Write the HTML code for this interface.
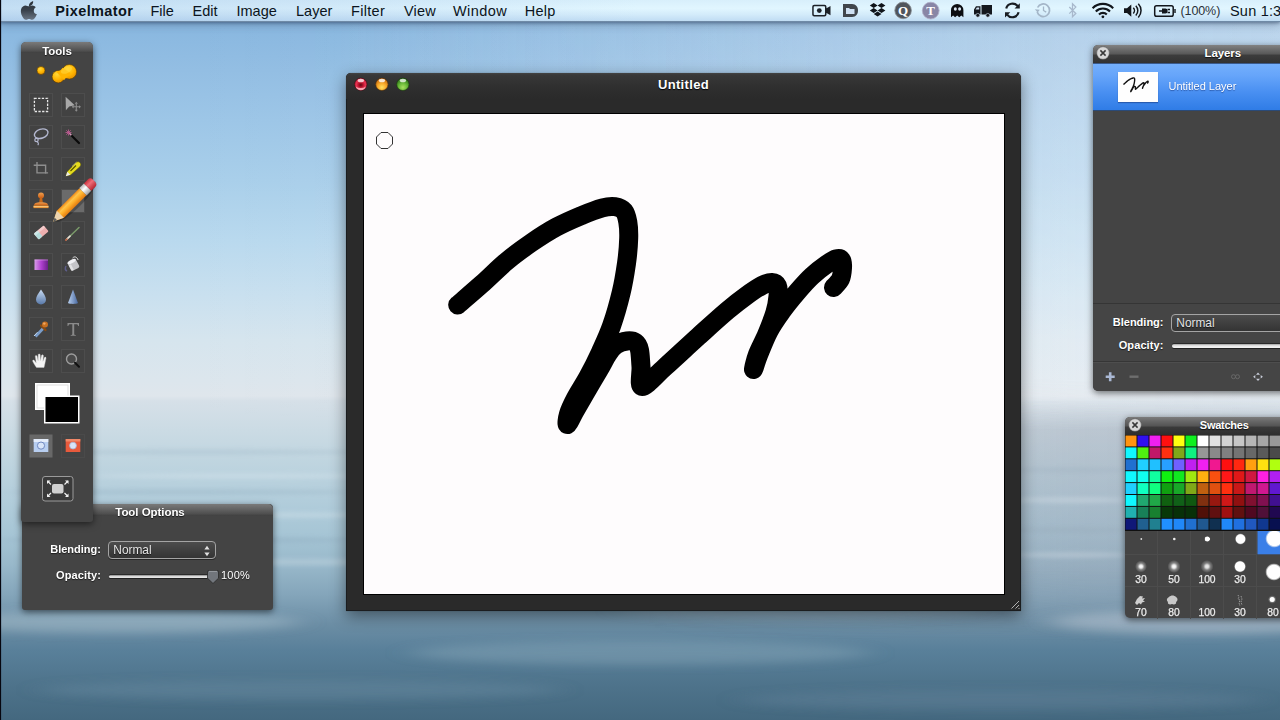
<!DOCTYPE html>
<html><head><meta charset="utf-8">
<style>
*{box-sizing:border-box;margin:0;padding:0}
html,body{width:1280px;height:720px;overflow:hidden;background:#5a7f96}
body{position:relative;font-family:"Liberation Sans",sans-serif;color:#fff}
.abs{position:absolute}
#bg{position:absolute;left:0;top:0;width:1280px;height:720px;
 background:linear-gradient(180deg,#88b6df 0px,#8ab8e0 30px,#93bee3 70px,#9dc6e7 120px,#a9cfea 180px,#b9d9ee 240px,#c9e0ef 295px,#d6e5ee 340px,#dce6ed 380px,#dfe6ec 396px,#d6e0e8 401px,#cbdbe4 430px,#bed4df 465px,#b2cddb 500px,#a6c5d5 535px,#98b8ca 565px,#84a5ba 595px,#6b8da4 625px,#59809a 650px,#4e738b 685px,#44687f 720px)}
#bgr{position:absolute;left:0;top:0;width:1280px;height:720px;
 background:linear-gradient(90deg,rgba(255,255,255,0) 0%,rgba(255,255,255,0) 15%,rgba(255,255,255,.12) 100%);-webkit-mask-image:linear-gradient(180deg,#000 0,#000 395px,transparent 420px);mask-image:linear-gradient(180deg,#000 0,#000 395px,transparent 420px)}
#bgs{position:absolute;left:640px;top:400px;width:640px;height:240px;
 background:linear-gradient(90deg,rgba(150,150,165,0) 0%,rgba(150,150,165,.3) 70%,rgba(150,150,165,.32) 100%);-webkit-mask-image:linear-gradient(180deg,transparent 0,#000 30px,#000 170px,transparent 240px);mask-image:linear-gradient(180deg,transparent 0,#000 30px,#000 170px,transparent 240px)}
#bgr2{position:absolute;left:0;top:0;width:1280px;height:430px;-webkit-mask-image:linear-gradient(180deg,#000 0,#000 88%,transparent 100%);mask-image:linear-gradient(180deg,#000 0,#000 88%,transparent 100%);
 background:linear-gradient(90deg,rgba(240,244,250,0) 0%,rgba(240,244,250,0) 25%,rgba(240,244,250,.36) 85%,rgba(240,244,250,.4) 100%)}
#edge{position:absolute;left:0;top:0;width:2px;height:720px;background:linear-gradient(90deg,#06060f 0,#06060f 1px,rgba(40,50,70,.25) 1px,rgba(40,50,70,.1) 2px);z-index:50}
/* menubar */
#menubar{position:absolute;left:0;top:0;width:1280px;height:21px;
 background:linear-gradient(90deg,rgba(150,185,225,.38) 0,rgba(150,185,225,.2) 25%,rgba(150,185,225,0) 50%),linear-gradient(180deg,#d8effb 0,#e1f6ff 40%,#d3ebfa 70%,#c0dcf3 100%);
 box-shadow:0 1px 0 #6f8aa6,0 2px 3px rgba(40,60,90,.5),0 4px 8px rgba(40,60,90,.3)}
#menubar span{position:absolute;top:2.500px;font-size:14.5px;color:#0b1420;line-height:17px;white-space:nowrap}
#menubar span.b{font-weight:bold}
/* panels */
.panel{position:absolute;background:#444;border-radius:5px;box-shadow:0 2px 7px rgba(0,0,0,.55)}
.ptitle{position:absolute;left:0;top:0;right:0;height:11px;border-radius:5px 5px 0 0;background:linear-gradient(180deg,#7a7a7a,#505050 80%,#3f3f3f)}
.ptext{position:absolute;font-size:11.5px;font-weight:bold;color:#fff;text-shadow:0 1px 1px rgba(0,0,0,.7);white-space:nowrap;letter-spacing:-.1px}
.lbl{position:absolute;font-size:11.5px;color:#fff;font-weight:bold;white-space:nowrap;text-shadow:0 1px 1px rgba(0,0,0,.6)}
</style></head><body>
<div id="bg"></div><div id="bgr"></div><div id="bgr2"></div><div id="bgs"></div><svg class="abs" style="left:0;top:380px" width="1280" height="340" viewBox="0 380 1280 340">
<defs><filter id="bl" x="-20%" y="-200%" width="140%" height="500%"><feGaussianBlur stdDeviation="14 5"/></filter><filter id="bl2" x="-20%" y="-200%" width="140%" height="500%"><feGaussianBlur stdDeviation="10 2"/></filter></defs>
<g filter="url(#bl)">
<ellipse cx="1200" cy="622" rx="150" ry="12" fill="#d0d8e2" opacity=".4"/>
<ellipse cx="800" cy="610" rx="180" ry="9" fill="#a8bccb" opacity=".35"/>
<ellipse cx="640" cy="653" rx="230" ry="12" fill="#a0b8c8" opacity=".3"/>
<ellipse cx="120" cy="622" rx="180" ry="11" fill="#b8ccd8" opacity=".4"/>
<ellipse cx="300" cy="690" rx="260" ry="10" fill="#7898ac" opacity=".3"/>
<ellipse cx="1000" cy="700" rx="260" ry="10" fill="#6c8ca2" opacity=".3"/>
</g>
<g filter="url(#bl2)" opacity=".3">
<ellipse cx="200" cy="452" rx="170" ry="2.500" fill="#9ab4c4"/>
<ellipse cx="240" cy="476" rx="150" ry="2.500" fill="#e4eef4"/>
<ellipse cx="180" cy="492" rx="170" ry="3" fill="#90acbe"/>
<ellipse cx="260" cy="515" rx="140" ry="3" fill="#e0ecf2"/>
<ellipse cx="180" cy="540" rx="180" ry="3.500" fill="#88a6ba"/>
<ellipse cx="300" cy="562" rx="120" ry="3.500" fill="#d4e2ea"/>
<ellipse cx="1070" cy="470" rx="60" ry="2.500" fill="#98acbc"/>
<ellipse cx="1070" cy="500" rx="60" ry="3" fill="#e4eaf0"/>
<ellipse cx="1070" cy="530" rx="60" ry="3" fill="#94a8b8"/>
<ellipse cx="1070" cy="555" rx="60" ry="3" fill="#dfe6ec"/>
</g>
</svg>
<div id="edge"></div>

<!-- MENUBAR -->
<div id="menubar">
<span class="b" style="left:55.300px;letter-spacing:.38px">Pixelmator</span>
<span style="left:150.500px">File</span>
<span style="left:192.500px">Edit</span>
<span style="left:236.500px">Image</span>
<span style="left:296px">Layer</span>
<span style="left:351px;letter-spacing:.3px">Filter</span>
<span style="left:404px;letter-spacing:.15px">View</span>
<span style="left:453px;letter-spacing:.42px">Window</span>
<span style="left:524.700px;letter-spacing:.3px">Help</span>
<span style="left:1180.500px;font-size:12.500px;color:#2a3038;letter-spacing:-.1px">(100%)</span>
<span style="left:1230px;letter-spacing:.2px">Sun 1:3</span>
<svg class="abs" style="left:0;top:0" width="1280" height="22" viewBox="0 0 1280 22">
<defs><linearGradient id="apl" x1="0" y1="0" x2="0" y2="1"><stop offset="0" stop-color="#2a3038"/><stop offset=".5" stop-color="#3a424c"/><stop offset="1" stop-color="#6a7684"/></linearGradient></defs>
<!-- apple -->
<path transform="translate(3.900 0) scale(.935 1)" d="M31.300 1.200c.2 1.500-.5 2.800-1.300 3.600-.9.900-2.100 1.500-3.200 1.400-.2-1.400.5-2.700 1.300-3.500.9-.9 2.300-1.500 3.200-1.500zM35.300 14c-.5 1.300-.8 1.900-1.500 3-.9 1.400-2.200 2.800-3.600 2.800-1.300 0-1.700-.8-3.300-.8s-2.100.8-3.400.8c-1.400 0-2.600-1.300-3.500-2.700-2.200-3.300-2.400-7.200-1-9.300.9-1.500 2.500-2.400 4-2.400 1.500 0 2.500.9 3.700.9 1.200 0 2-.9 3.700-.9 1.300 0 2.700.7 3.700 1.900-3.100 1.700-2.600 6.200.2 6.700z" fill="url(#apl)"/>
<g fill="#1c2128" stroke="none">
<!-- camera -->
<path d="M814.200 4.700h10.300a2 2 0 0 1 2 2v1.600l4-2.400v9.400l-4-2.400v1.600a2 2 0 0 1-2 2h-10.300a2 2 0 0 1-2-2v-7.800a2 2 0 0 1 2-2zm.3 1.500a.8.800 0 0 0-.8.800v7.200c0 .4.400.8.800.8h9.700c.4 0 .8-.4.800-.8v-7.200a.8.800 0 0 0-.8-.8z"/>
<circle cx="819.300" cy="10.600" r="2.400"/>
<!-- D folder -->
<path d="M843 4h9c4 0 6 3 6 6.500s-2 6.500-6 6.500h-9z" fill="#41464c"/>
<path d="M846 8h3l1 1h4.500v5h-8.500z" fill="#cfe0f2"/>
<!-- dropbox -->
<path d="M873.700 3l3.900 2.500-3.900 2.500-3.900-2.500zM881.500 3l3.900 2.500-3.900 2.500-3.900-2.500zM873.700 8l3.900 2.500-3.900 2.500-3.900-2.500zM881.500 8l3.900 2.500-3.900 2.500-3.900-2.500zM873.700 14l3.900-2.400 3.900 2.400-3.900 2.500z" fill="#10141a"/>
<!-- Q -->
<circle cx="903.100" cy="10.400" r="8.300" fill="#50555c"/>
<circle cx="903.100" cy="10.400" r="8.300" fill="none" stroke="#8a9098" stroke-width=".8"/>
<!-- T -->
<circle cx="930.700" cy="10.600" r="8.400" fill="#8886a6"/>
<circle cx="930.700" cy="10.600" r="8.400" fill="none" stroke="#b0aec8" stroke-width=".8"/>
<!-- ghost -->
<path d="M951 17.200v-7a6.200 6.200 0 0 1 12.400 0v7l-2.100-1.600-2 1.600-2.100-1.600-2.100 1.600-2-1.600z" fill="#0c0e12"/>
<ellipse cx="955.300" cy="9" rx="1.500" ry="1.800" fill="#dce8f4"/><ellipse cx="959.600" cy="9" rx="1.500" ry="1.800" fill="#dce8f4"/>
<!-- truck -->
<path d="M981.500 5h10.500v9.500h-10.500zM974 9.500l2-3.200h4.500v8.200h-6.500z" fill="#14181e"/>
<path d="M975.500 9.600l1.300-2h2.400v2z" fill="#cfe0f2"/>
<circle cx="977.800" cy="15.300" r="1.900" fill="#14181e" stroke="#cfe0f2" stroke-width=".6"/><circle cx="987.800" cy="15.300" r="1.900" fill="#14181e" stroke="#cfe0f2" stroke-width=".6"/>
</g>
<text x="903.100" y="14.800" font-family="Liberation Serif, serif" font-size="13" font-weight="bold" fill="#fff" text-anchor="middle">Q</text>
<text x="930.700" y="15.200" font-family="Liberation Serif, serif" font-size="13" font-weight="bold" fill="#fff" text-anchor="middle">T</text>
<!-- sync -->
<g fill="none" stroke="#181c22" stroke-width="2.200">
<path d="M1006.200 8.500a6.500 6.500 0 0 1 11.500-2.300"/><path d="M1018.600 12.300a6.500 6.500 0 0 1-11.500 2.300"/>
</g>
<path d="M1019.800 3.200v5.300h-5.300zM1005 17.600v-5.300h5.300z" fill="#181c22"/>
<!-- time machine (faded) -->
<g fill="none" stroke="#a4b6c8" stroke-width="1.700"><path d="M1037.600 7.500a6.300 6.300 0 1 1-.4 4.500"/><path d="M1043.500 6.500v4l2.700 1.600" stroke-width="1.300"/></g>
<path d="M1034.800 9.200l5 .6-2.200 2.800z" fill="#a4b6c8"/>
<!-- bluetooth (faded) -->
<path d="M1069.300 7l6.500 6.500-3.300 3.300v-13l3.300 3.300-6.500 6.500" fill="none" stroke="#a8b8cc" stroke-width="1.300"/>
<!-- wifi -->
<g fill="none" stroke="#12161c" stroke-width="2.100" stroke-linecap="butt">
<path d="M1092.600 8.200a14.500 14.500 0 0 1 20.600 0"/>
<path d="M1095.800 11.500a10 10 0 0 1 14.200 0"/>
<path d="M1099 14.500a5.500 5.500 0 0 1 7.800 0"/>
</g>
<circle cx="1102.900" cy="16.800" r="1.400" fill="#12161c"/>
<!-- volume -->
<path d="M1124 8.200h3l4.300-3.700v12.200l-4.300-3.700h-3z" fill="#12161c"/>
<g fill="none" stroke="#12161c" stroke-width="1.500"><path d="M1133.300 7.800a4 4 0 0 1 0 5.600"/><path d="M1135.800 5.700a7 7 0 0 1 0 9.800"/><path d="M1138.300 3.800a9.800 9.800 0 0 1 0 13.600"/></g>
<!-- battery -->
<rect x="1154.700" y="5.700" width="18.500" height="10.600" rx="1.800" fill="none" stroke="#12161c" stroke-width="1.500"/>
<path d="M1174.300 9h1.400v4h-1.400z" fill="#12161c"/>
<path d="M1159 11h3.200M1167.500 9.500h2.500M1167.500 12.500h2.500" stroke="#12161c" stroke-width="1.300"/>
<path d="M1162 8.400h3.500a2 2 0 0 1 2 2v1.200a2 2 0 0 1-2 2h-3.500z" fill="#12161c"/>
</svg>
</div>

<!-- TOOL OPTIONS -->
<div id="topt" class="panel" style="left:22px;top:503.500px;width:250.500px;height:106.500px;border-radius:4px 4px 3px 3px">
<div class="ptitle" style="height:12px"></div>
<div class="ptext" style="left:25px;width:250px;text-align:center;top:2.500px;line-height:13px;font-size:11.500px;letter-spacing:-.05px;left:3px">Tool Options</div>
<div class="lbl" style="right:171.600px;top:39px;line-height:13px;font-size:11px;letter-spacing:0">Blending:</div>
<div class="abs" style="left:86.400px;top:37.700px;width:107.600px;height:17.700px;border:1px solid #a4a4a4;border-radius:4px;background:linear-gradient(180deg,#4c4c4c,#343434);box-shadow:0 1px 0 rgba(0,0,0,.4)"></div>
<div class="abs" style="left:91.300px;top:40.600px;line-height:13px;font-size:11.900px;color:#e4e4e4;text-shadow:0 1px 1px rgba(0,0,0,.7)">Normal</div>
<svg class="abs" style="left:181px;top:41px" width="8" height="12" viewBox="0 0 8 12"><path d="M4 .8l2.600 3.700h-5.200zM4 11.200l2.600-3.700h-5.200z" fill="#e0e0e0"/></svg>
<div class="lbl" style="right:171.600px;top:65px;line-height:13px;font-size:11px;letter-spacing:.1px">Opacity:</div>
<div class="abs" style="left:87.400px;top:71.800px;width:103px;height:3px;border-radius:2px;background:linear-gradient(180deg,#8a8a8a,#d8d8d8 50%,#e8e8e8);box-shadow:0 1px 0 #222,0 -1px 0 #2a2a2a"></div>
<svg class="abs" style="left:184.500px;top:66px" width="12" height="14" viewBox="0 0 12 14"><path d="M2 .5h8a1.500 1.500 0 0 1 1.500 1.500v6.200l-5.500 5.300-5.500-5.300v-6.200a1.500 1.500 0 0 1 1.500-1.500z" fill="#72767c" stroke="#2a2a2a" stroke-width=".8"/><path d="M2 1.300h8" stroke="#a8acb0" stroke-width=".8"/></svg>
<div class="lbl" style="left:199px;top:65px;line-height:13px;font-size:11px;font-weight:normal;letter-spacing:.25px">100%</div>
</div>
<!-- TOOLS -->
<div id="tools" class="panel" style="left:21px;top:42px;width:72px;height:479.500px;border-radius:5px 5px 3px 3px">
<div class="ptitle"></div>
<div class="ptext" style="left:0;width:72px;text-align:center;top:2.600px;line-height:13px;font-size:11.500px;letter-spacing:-.05px">Tools</div>
</div>
<svg class="abs" style="left:0;top:0" width="300" height="540" viewBox="0 0 300 540">
<defs>
<radialGradient id="gold" cx=".4" cy=".3" r=".8"><stop offset="0" stop-color="#ffd83a"/><stop offset=".55" stop-color="#ffb400"/><stop offset="1" stop-color="#e08a00"/></radialGradient>
<linearGradient id="pbody" x1="0" y1="0" x2="0" y2="1"><stop offset="0" stop-color="#f08a18"/><stop offset=".3" stop-color="#ffc44a"/><stop offset=".55" stop-color="#ffb02a"/><stop offset="1" stop-color="#e27a10"/></linearGradient>
<linearGradient id="perase" x1="0" y1="0" x2="0" y2="1"><stop offset="0" stop-color="#c8323c"/><stop offset=".4" stop-color="#ef6d78"/><stop offset="1" stop-color="#b82832"/></linearGradient>
<linearGradient id="pfer" x1="0" y1="0" x2="0" y2="1"><stop offset="0" stop-color="#b8b8b8"/><stop offset=".4" stop-color="#ffffff"/><stop offset="1" stop-color="#a0a0a0"/></linearGradient>
<linearGradient id="purp" x1="0" y1="0" x2="1" y2="0"><stop offset="0" stop-color="#d79be8"/><stop offset=".5" stop-color="#b040d0"/><stop offset="1" stop-color="#6a2088"/></linearGradient>
<linearGradient id="drop" x1="0" y1="0" x2="0" y2="1"><stop offset="0" stop-color="#c8dcf4"/><stop offset="1" stop-color="#5878a8"/></linearGradient>
<linearGradient id="cone" x1="0" y1="0" x2="1" y2="0"><stop offset="0" stop-color="#b8d0f0"/><stop offset="1" stop-color="#4868a0"/></linearGradient>
<linearGradient id="stamp" x1="0" y1="0" x2="0" y2="1"><stop offset="0" stop-color="#f0a050"/><stop offset="1" stop-color="#c85a10"/></linearGradient>
</defs>
<!-- cells -->
<g fill="#424242" stroke="#4d4d4d" stroke-width="1">
<rect x="29.5" y="93.5" width="23" height="23"/>
<rect x="61.5" y="93.5" width="23" height="23"/>
<rect x="29.5" y="125.5" width="23" height="23"/>
<rect x="61.5" y="125.5" width="23" height="23"/>
<rect x="29.5" y="157.5" width="23" height="23"/>
<rect x="61.5" y="157.5" width="23" height="23"/>
<rect x="29.5" y="189.5" width="23" height="23"/>
<rect x="61.5" y="189.5" width="23" height="23"/>
<rect x="29.5" y="221.5" width="23" height="23"/>
<rect x="61.5" y="221.5" width="23" height="23"/>
<rect x="29.5" y="253.5" width="23" height="23"/>
<rect x="61.5" y="253.5" width="23" height="23"/>
<rect x="29.5" y="285.5" width="23" height="23"/>
<rect x="61.5" y="285.5" width="23" height="23"/>
<rect x="29.5" y="317.5" width="23" height="23"/>
<rect x="61.5" y="317.5" width="23" height="23"/>
<rect x="29.5" y="349.5" width="23" height="23"/>
<rect x="61.5" y="349.5" width="23" height="23"/>
</g>
<!-- selected cell -->
<rect x="62" y="190" width="22" height="22" fill="#6b6b6b"/>
<!-- gold blobs -->
<circle cx="41" cy="70.5" r="4" fill="url(#gold)" stroke="#5a3a00" stroke-width=".6"/>
<circle cx="58.300" cy="76.700" r="6.200" fill="url(#gold)" stroke="#5a3a00" stroke-width=".6"/><circle cx="69.300" cy="71.800" r="7.300" fill="url(#gold)" stroke="#5a3a00" stroke-width=".6"/><path d="M56 71.200c3 .5 5.500-1.500 6.500-3.500l8 5.500c-2 3-4.500 4-6.500 7z" fill="#ffb400"/><ellipse cx="66.500" cy="70" rx="6" ry="3.200" fill="#ffd840" opacity=".55" transform="rotate(-25 66.500 70)"/>
<!-- marquee -->
<rect x="34.400" y="98.300" width="13.200" height="13.200" fill="none" stroke="#e8e8e8" stroke-width="1.300" stroke-dasharray="2.300 1.400"/>
<!-- move arrow -->
<path d="M65.600 96.800l.3 13.500 3.300-3.800 5.500-1.200z" fill="#a8a8a8"/>
<path d="M76.300 103.500v6.500M73 106.800h6.500" stroke="#8c8c8c" stroke-width="1.100"/>
<path d="M76.300 101.800l1.600 2h-3.200zM76.300 111.800l1.600-2h-3.200zM71.600 106.800l2-1.600v3.200zM81 106.800l-2-1.600v3.200z" fill="#8c8c8c"/>
<!-- lasso -->
<g transform="translate(-.3 1.700)"><ellipse cx="41.500" cy="132" rx="7" ry="4.500" transform="rotate(-18 41.500 132)" fill="none" stroke="#b4b8d0" stroke-width="1.400"/>
<circle cx="36.800" cy="138.300" r="1.700" fill="none" stroke="#b4b8d0" stroke-width="1.200"/>
<path d="M37.500 140c1.500 1 1.500 2.500 .5 3.500" fill="none" stroke="#b4b8d0" stroke-width="1.100"/>
</g>
<!-- wand -->
<path d="M69.500 133.500L79 143" stroke="#0a0a0a" stroke-width="2.200" stroke-linecap="round"/>
<path d="M69.300 133.300l2 2" stroke="#e8b8d0" stroke-width="1.600"/>
<path d="M68.500 129.500v6M65.500 132.500h6M66.300 130.300l4.400 4.400M70.700 130.300l-4.400 4.400" stroke="#d060a0" stroke-width=".8" opacity=".9"/>
<!-- crop -->
<path d="M33.700 165.200H45.600V173.700M37 162V172.900H48.100" fill="none" stroke="#8e8e8e" stroke-width="1.400"/>
<!-- slice knife -->
<path d="M66 176l1.200-4.300 8.800-9c1.200-1.200 3-1.200 4 0 1 1 1 2.800-.2 4l-9.300 8.300z" fill="#e6dc1e" stroke="#6a6400" stroke-width=".5"/>
<path d="M65.800 176.300l1.500-4.500 3 3z" fill="#ececec"/>
<path d="M70.500 171l5.500-5.500" stroke="#5a5600" stroke-width="1.200"/>
<path d="M72 166.500l4.500-4.300" stroke="#fff8a0" stroke-width=".8" opacity=".8"/>
<!-- stamp -->
<circle cx="41" cy="195.500" r="3" fill="url(#stamp)"/>
<path d="M39.800 198h2.400l.6 4.500h-3.600z" fill="#c86818"/>
<path d="M34 205.500c0-2 2-3.200 7-3.200s7 1.200 7 3.200z" fill="url(#stamp)"/>
<rect x="33.500" y="205.500" width="15" height="2.600" fill="#e89030"/>
<rect x="33.500" y="206.300" width="15" height=".8" fill="#ffd890"/>
<!-- eraser -->
<g transform="rotate(-40 41.200 232.500)"><rect x="34.700" y="228.700" width="13" height="7.600" rx="1" fill="#eeb0b0"/><rect x="34.700" y="228.700" width="5" height="7.600" rx="1" fill="#b4dcdc"/><rect x="34.700" y="228.700" width="13" height="2.600" rx="1" fill="#fff" opacity=".35"/></g>
<!-- thin brush -->
<path d="M66.500 239.500L79 227.500" stroke="#7a9a6a" stroke-width="1.500" stroke-linecap="round"/>
<path d="M66.500 239.500l3.500-3.300" stroke="#e8e0d8" stroke-width="1.700" stroke-linecap="round"/>
<path d="M65.800 240.200l1.200-1.200" stroke="#c06040" stroke-width="1.500" stroke-linecap="round"/>
<!-- gradient -->
<rect x="34.500" y="259.500" width="13.500" height="10.500" fill="url(#purp)"/>
<rect x="34.500" y="259.500" width="13.500" height="1" fill="#e8b8f0" opacity=".5"/>
<!-- bucket -->
<g transform="translate(73.500 265) scale(.88) rotate(-28) translate(-73.200 -265)"><rect x="68" y="260" width="10.500" height="10.500" rx="2" fill="#c4c4c8"/><ellipse cx="73.200" cy="260.500" rx="5.300" ry="2" fill="#f0f0f4"/><rect x="68" y="263" width="3" height="7" fill="#fff" opacity=".5"/><path d="M76 257.500c3-1 5 1 4.500 5" fill="none" stroke="#e0e0e0" stroke-width="1"/></g>
<path d="M66 266c-1 2-1 4 1 5" stroke="#6a6aa8" stroke-width="1.500" fill="none" opacity=".7"/>
<!-- drop -->
<path d="M41 289.500c2.500 4 5 6.800 5 10a5 5 0 0 1-10 0c0-3.200 2.500-6 5-10z" fill="url(#drop)"/>
<!-- cone -->
<path d="M73 289.500l5 13.500c-2 1.200-8 1.200-10 0z" fill="url(#cone)"/>
<!-- eyedropper -->
<path d="M34.500 335.500l7.500-8 2 2-7.500 8z" fill="#7a9cc8"/>
<path d="M34 336l3.500-3.800" stroke="#c8dcf4" stroke-width="1"/>
<path d="M41 325.500l4.500 4.500" stroke="#8a4a10" stroke-width="2.200" stroke-linecap="round"/>
<circle cx="45" cy="324.500" r="3" fill="#c87020"/>
<circle cx="44.300" cy="323.600" r="1.200" fill="#f0a860"/>
<!-- T -->
<path d="M67.500 323h11.500v3h-.8c-.2-1.300-.7-1.800-2-1.800h-2v9.500c0 1 .4 1.300 1.600 1.400v.7h-5.100v-.7c1.200-.1 1.600-.4 1.600-1.400v-9.500h-2c-1.300 0-1.800.5-2 1.800h-.8z" fill="#8a8a8a"/>
<!-- hand -->
<path d="M36.500 367.500c-1.500-2-3-4.500-3.800-6.200-.5-1 .8-1.800 1.600-.9l1.900 2.300-.9-6.200c-.2-1.200 1.500-1.500 1.800-.3l1 4.500.1-5.800c0-1.300 1.900-1.300 2 0l.3 5.700 1-5c.3-1.200 2-.9 1.900.3l-.5 5.400 1.400-3.600c.4-1.100 2-.6 1.700.6-.7 3-1 5.500-2 9.200z" fill="#f4f4f4" stroke="#c8c8c8" stroke-width=".4"/>
<!-- zoom -->
<circle cx="71.500" cy="359" r="5" fill="#4a4a4a" stroke="#9c9c9c" stroke-width="1.400"/>
<path d="M75 362.800l4 4" stroke="#111" stroke-width="2" stroke-linecap="round"/>
<!-- colour wells -->
<rect x="35" y="383" width="35" height="27" fill="#fff"/><rect x="37" y="385" width="31" height="23" fill="none" stroke="#d8d8d8" stroke-width=".8"/>
<rect x="44" y="395.500" width="35.500" height="28" fill="#fff"/><rect x="45.500" y="397" width="32.500" height="25" fill="#000"/>
<!-- quick mask buttons -->
<rect x="29.500" y="434.500" width="23" height="23" fill="#686868"/>
<rect x="61.500" y="434.500" width="23" height="23" fill="none" stroke="#4a4a4a"/>
<rect x="33.700" y="439" width="14.600" height="13" fill="#b8cef0"/><rect x="33.700" y="439" width="14.600" height="3" fill="#e4ecfa"/><circle cx="41" cy="445.600" r="3.600" fill="#d8e4f8" stroke="#7088c0" stroke-width="1"/>
<rect x="65.700" y="439" width="14.600" height="13" fill="#e85a3c"/><rect x="65.700" y="439" width="14.600" height="2.500" fill="#f08868"/><circle cx="73" cy="445.600" r="3.400" fill="#d8e4f8" stroke="#a8b8d8" stroke-width=".8"/>
<!-- fullscreen -->
<rect x="42.500" y="476.500" width="30.500" height="24.500" rx="2.500" fill="#3a3a3a" stroke="#9a9a9a" stroke-width="1"/>
<rect x="52" y="484" width="11.500" height="9.500" rx="2" fill="#d0d0d0"/>
<path d="M47 480.500h3.500l-3.500 3.500zM68.500 480.500h-3.500l3.500 3.500zM47 497h3.500l-3.500-3.500zM68.500 497h-3.500l3.500-3.500z" fill="#f0f0f0"/>
<path d="M47.500 481l3.500 3.500M68 481l-3.500 3.500M47.500 496.500l3.500-3.500M68 496.500l-3.500-3.500" stroke="#f0f0f0" stroke-width="1.200"/>
<!-- big pencil -->
<g transform="translate(53.300 221.400) rotate(-45)">
<ellipse cx="30" cy="2" rx="28" ry="6" fill="#000" opacity=".25"/>
<path d="M0 0l10-5h32v10h-32z" fill="url(#pbody)"/>
<path d="M0 0l10-5v10z" fill="#ecd4b0"/>
<path d="M0 0l3.600-1.800v3.600z" fill="#5a5a5a"/>
<rect x="42" y="-5.200" width="6.500" height="10.400" fill="url(#pfer)"/>
<path d="M48.500-5.200h5.500a3.500 3.500 0 0 1 3.500 3.500v3.400a3.500 3.500 0 0 1-3.500 3.500h-5.500z" fill="url(#perase)"/>
</g>
</svg>

<!-- WINDOW -->
<div id="win" class="abs" style="left:346px;top:73px;width:675px;height:538px;background:#2a2a2a;border-radius:5px 5px 0 0;box-shadow:inset 0 0 0 1px rgba(15,18,22,.55),0 0 1px rgba(15,20,25,.6),0 5px 16px rgba(0,0,0,.45)">
<div class="abs" style="left:0;top:0;width:675px;height:26px;border-radius:5px 5px 0 0;background:linear-gradient(180deg,#444 0,#383838 2px,#2f2f2f 14px,#2a2a2a 26px)"></div>
<div class="abs" style="left:0;width:675px;top:4.400px;text-align:center;font-size:13px;font-weight:bold;line-height:15px;color:#fff;text-shadow:0 1px 1px #000;letter-spacing:.35px">Untitled</div>
<div class="abs" style="left:17px;top:40px;width:642px;height:482px;background:#000"></div>
<div class="abs" style="left:18px;top:41px;width:640px;height:480px;background:#fefcfd"></div>
</div>
<svg class="abs" style="left:0;top:0" width="1280" height="720" viewBox="0 0 1280 720">
<defs>
<radialGradient id="tr" cx=".5" cy=".55" r=".55"><stop offset="0" stop-color="#5a0810"/><stop offset=".3" stop-color="#b01028"/><stop offset=".65" stop-color="#e83050"/><stop offset="1" stop-color="#c02038"/></radialGradient>
<radialGradient id="ty" cx=".5" cy=".75" r=".7"><stop offset="0" stop-color="#ffe060"/><stop offset=".5" stop-color="#f8a828"/><stop offset="1" stop-color="#c06810"/></radialGradient>
<radialGradient id="tg" cx=".5" cy=".75" r=".7"><stop offset="0" stop-color="#a8e060"/><stop offset=".5" stop-color="#68b838"/><stop offset="1" stop-color="#2a7018"/></radialGradient>
</defs>
<circle cx="360.800" cy="84.300" r="6.200" fill="url(#tr)" stroke="#3a0a10" stroke-width=".6"/>
<ellipse cx="360.800" cy="80.500" rx="3.200" ry="1.800" fill="#fff" opacity=".75"/>
<path d="M355.800 86.500a5.200 5.200 0 0 0 10 0a6 3.500 0 0 1-10 0z" fill="#ffc0c8" opacity=".8"/>
<circle cx="381.900" cy="84.300" r="6.200" fill="url(#ty)" stroke="#4a2a08" stroke-width=".6"/>
<ellipse cx="381.900" cy="80.500" rx="3.200" ry="1.800" fill="#fff" opacity=".8"/>
<circle cx="402.900" cy="84.300" r="6.200" fill="url(#tg)" stroke="#183808" stroke-width=".6"/>
<ellipse cx="402.900" cy="80.500" rx="3.200" ry="1.800" fill="#fff" opacity=".75"/>
<!-- brush cursor -->
<path d="M381 132.500h7l4.500 4.500v7l-4.500 4.500h-7l-4.500-4.500v-7z" fill="none" stroke="#333" stroke-width="1"/>
<!-- stroke -->
<path d="M457.7 305.0C461.7 301.5 473.5 291.5 481.7 284.2C489.9 276.9 498.4 268.1 506.7 261.2C515.0 254.2 523.4 248.2 531.7 242.5C540.0 236.8 548.4 231.4 556.7 226.9C565.0 222.4 574.1 218.6 581.7 215.4C589.3 212.2 597.0 209.3 602.5 207.8C608.0 206.3 611.4 206.1 615.0 206.6C618.6 207.1 621.9 208.4 624.0 211.0C626.1 213.6 627.0 217.4 627.8 222.0C628.6 226.6 628.9 231.4 628.7 238.3C628.5 245.2 627.8 254.3 626.5 263.3C625.2 272.3 623.7 282.1 621.2 292.5C618.7 302.9 615.0 316.1 611.5 326.0C608.0 335.9 604.3 343.6 600.4 352.1C596.5 360.6 592.1 369.4 587.9 377.1C583.7 384.8 578.6 392.4 575.4 398.5C572.2 404.6 569.8 409.7 568.5 414.0C567.2 418.3 566.4 425.0 567.5 424.5C568.6 424.0 571.9 416.4 575.0 411.0C578.1 405.6 582.0 398.8 586.0 392.0C590.0 385.2 595.3 376.3 599.0 370.0C602.7 363.7 605.2 358.2 608.0 354.0C610.8 349.8 612.8 347.2 616.0 345.0C619.2 342.8 623.8 341.4 627.0 341.0C630.2 340.6 633.4 341.0 635.5 342.5C637.6 344.0 638.6 346.0 639.5 350.0C640.4 354.0 640.5 360.6 641.0 366.7C641.5 372.8 638.3 386.4 642.3 386.5C646.3 386.6 655.7 375.3 665.0 367.0C674.3 358.7 687.9 345.9 698.3 336.5C708.7 327.1 719.5 317.2 727.5 310.5C735.5 303.8 740.2 300.2 746.0 296.0C751.8 291.8 757.7 287.8 762.0 285.5C766.3 283.2 769.4 282.4 772.0 282.5C774.6 282.6 776.5 283.8 777.5 286.0C778.5 288.2 778.4 291.6 778.0 296.0C777.6 300.4 776.9 305.8 775.0 312.2C773.1 318.6 769.6 327.4 766.7 334.4C763.8 341.4 759.7 348.5 757.5 354.4C755.3 360.2 753.2 369.6 753.5 369.5C753.8 369.4 756.4 360.4 759.0 354.0C761.6 347.6 765.2 338.2 769.0 331.0C772.8 323.8 777.2 317.7 782.0 311.0C786.8 304.3 793.0 296.8 798.0 291.0C803.0 285.2 807.2 280.4 812.0 276.0C816.8 271.6 822.7 267.1 826.7 264.3C830.7 261.5 833.5 259.7 836.0 259.0C838.5 258.3 840.4 258.5 841.5 260.0C842.6 261.5 842.7 264.8 842.5 268.0C842.3 271.2 842.0 275.8 840.5 279.0C839.0 282.2 834.7 286.1 833.5 287.5" fill="none" stroke="#000" stroke-width="19" stroke-linecap="round" stroke-linejoin="round"/>
<!-- resize grip -->
<path d="M1011.500 608.500l7.500-7.500M1015.500 608.500l3.500-3.500M1018.500 609l1-1" stroke="#b0b0b0" stroke-width="1"/>
</svg>
<!-- LAYERS -->
<div id="layers" class="panel" style="left:1093.300px;top:45.300px;width:259px;height:346px;background:#444">
<div class="abs" style="left:0;top:0;width:259px;height:18px;border-radius:5px 5px 0 0;background:linear-gradient(180deg,#828282 0,#6c6c6c 25%,#585858 50%,#3c3c3c 56%,#323232 100%)"></div>
<div class="ptext" style="left:0;width:259px;text-align:center;top:1.500px;line-height:13px;font-size:11.500px;letter-spacing:-.1px">Layers</div>
<svg class="abs" style="left:3.200px;top:1.200px" width="14" height="14" viewBox="0 0 14 14"><circle cx="7" cy="7" r="6.300" fill="#d8d8d8" stroke="#555" stroke-width=".5"/><path d="M4.400 4.400l5.200 5.200M9.600 4.400l-5.200 5.200" stroke="#383838" stroke-width="1.500" stroke-linecap="butt"/></svg>
<div class="abs" style="left:0;top:17.600px;width:259px;height:48px;background:linear-gradient(180deg,#74affc 0,#66a5fa 25%,#4a90f2 60%,#2f7ce6 100%);border-top:1px solid #3a5a8c;border-bottom:1px solid #2a4a78"></div>
<div class="abs" style="left:24.500px;top:26.400px;width:40.300px;height:30.500px;background:#fefefe;box-shadow:0 1px 1px rgba(0,0,40,.3)"></div>
<svg class="abs" style="left:24.500px;top:26.400px" width="40.300" height="30.500" viewBox="364 114 640 480" preserveAspectRatio="none"><path d="M457.7 305.0C461.7 301.5 473.5 291.5 481.7 284.2C489.9 276.9 498.4 268.1 506.7 261.2C515.0 254.2 523.4 248.2 531.7 242.5C540.0 236.8 548.4 231.4 556.7 226.9C565.0 222.4 574.1 218.6 581.7 215.4C589.3 212.2 597.0 209.3 602.5 207.8C608.0 206.3 611.4 206.1 615.0 206.6C618.6 207.1 621.9 208.4 624.0 211.0C626.1 213.6 627.0 217.4 627.8 222.0C628.6 226.6 628.9 231.4 628.7 238.3C628.5 245.2 627.8 254.3 626.5 263.3C625.2 272.3 623.7 282.1 621.2 292.5C618.7 302.9 615.0 316.1 611.5 326.0C608.0 335.9 604.3 343.6 600.4 352.1C596.5 360.6 592.1 369.4 587.9 377.1C583.7 384.8 578.6 392.4 575.4 398.5C572.2 404.6 569.8 409.7 568.5 414.0C567.2 418.3 566.4 425.0 567.5 424.5C568.6 424.0 571.9 416.4 575.0 411.0C578.1 405.6 582.0 398.8 586.0 392.0C590.0 385.2 595.3 376.3 599.0 370.0C602.7 363.7 605.2 358.2 608.0 354.0C610.8 349.8 612.8 347.2 616.0 345.0C619.2 342.8 623.8 341.4 627.0 341.0C630.2 340.6 633.4 341.0 635.5 342.5C637.6 344.0 638.6 346.0 639.5 350.0C640.4 354.0 640.5 360.6 641.0 366.7C641.5 372.8 638.3 386.4 642.3 386.5C646.3 386.6 655.7 375.3 665.0 367.0C674.3 358.7 687.9 345.9 698.3 336.5C708.7 327.1 719.5 317.2 727.5 310.5C735.5 303.8 740.2 300.2 746.0 296.0C751.8 291.8 757.7 287.8 762.0 285.5C766.3 283.2 769.4 282.4 772.0 282.5C774.6 282.6 776.5 283.8 777.5 286.0C778.5 288.2 778.4 291.6 778.0 296.0C777.6 300.4 776.9 305.8 775.0 312.2C773.1 318.6 769.6 327.4 766.7 334.4C763.8 341.4 759.7 348.5 757.5 354.4C755.3 360.2 753.2 369.6 753.5 369.5C753.8 369.4 756.4 360.4 759.0 354.0C761.6 347.6 765.2 338.2 769.0 331.0C772.8 323.8 777.2 317.7 782.0 311.0C786.8 304.3 793.0 296.8 798.0 291.0C803.0 285.2 807.2 280.4 812.0 276.0C816.8 271.6 822.7 267.1 826.7 264.3C830.7 261.5 833.5 259.7 836.0 259.0C838.5 258.3 840.4 258.5 841.5 260.0C842.6 261.5 842.7 264.8 842.5 268.0C842.3 271.2 842.0 275.8 840.5 279.0C839.0 282.2 834.7 286.1 833.5 287.5" fill="none" stroke="#111" stroke-width="22" stroke-linecap="round" stroke-linejoin="round"/></svg>
<div class="abs" style="left:75.200px;top:34.500px;line-height:13px;font-size:11px;color:#fff;text-shadow:0 1px 1px rgba(0,20,80,.45);white-space:nowrap">Untitled Layer</div>
<div class="abs" style="left:0;top:258px;width:259px;height:1px;background:#353535"></div>
<div class="abs" style="left:0;top:259px;width:259px;height:87px;background:#454545;border-radius:0 0 5px 5px"></div>
<div class="lbl" style="right:188.800px;top:270.500px;line-height:13px;font-size:11px;letter-spacing:0">Blending:</div>
<div class="abs" style="left:77.700px;top:269.100px;width:150px;height:17.500px;border:1px solid #a4a4a4;border-radius:4px;background:linear-gradient(180deg,#4c4c4c,#343434)"></div>
<div class="abs" style="left:83px;top:271.800px;line-height:13px;font-size:11.900px;color:#e4e4e4;text-shadow:0 1px 1px rgba(0,0,0,.7)">Normal</div>
<div class="lbl" style="right:188.800px;top:293.500px;line-height:13px;font-size:11px;letter-spacing:.1px">Opacity:</div>
<div class="abs" style="left:78.700px;top:299px;width:150px;height:3.500px;border-radius:2px;background:linear-gradient(180deg,#a0a0a0,#e8e8e8 45%,#f4f4f4);box-shadow:0 1px 0 #222,0 -1px 0 #2a2a2a"></div>
<div class="abs" style="left:0;top:316px;width:259px;height:1px;background:#363636"></div>
<div class="abs" style="left:0;top:317px;width:259px;height:1px;background:#4e4e4e"></div>
<svg class="abs" style="left:0;top:320px" width="200" height="24" viewBox="0 0 200 24">
<path d="M17.200 7.200v9M12.700 11.700h9" stroke="#aab8d4" stroke-width="2.600"/>
<path d="M36.500 11.700h9" stroke="#6e6e6e" stroke-width="2.400"/>
<path d="M138.500 11.700a2 2 0 1 0 4 0 2 2 0 1 0-4 0M142.500 11.700a2 2 0 1 0 4 0 2 2 0 1 0-4 0" fill="none" stroke="#686868" stroke-width="1"/>
<path d="M163 9.700l2-2.300 2 2.300zM163 13.700l2 2.300 2-2.300zM162.300 9.900l-2.200 1.800 2.200 1.800zM167.700 9.900l2.200 1.800-2.200 1.800z" fill="#c8ccd8"/>
</svg>
</div>
<!-- SWATCHES -->
<div id="sw" class="panel" style="left:1124.800px;top:416.700px;width:200px;height:201.800px;background:#444">
<div class="abs" style="left:0;top:0;width:200px;height:18.500px;border-radius:5px 5px 0 0;background:linear-gradient(180deg,#7c7c7c 0,#666 25%,#545454 50%,#3a3a3a 56%,#2e2e2e 100%)"></div>
<div class="ptext" style="left:75px;top:2px;line-height:13px;font-size:11px;letter-spacing:-.25px">Swatches</div>
<svg class="abs" style="left:3.700px;top:1.800px" width="14" height="14" viewBox="0 0 14 14"><circle cx="7" cy="7" r="6.300" fill="#d8d8d8" stroke="#555" stroke-width=".5"/><path d="M4.400 4.400l5.200 5.200M9.600 4.400l-5.200 5.200" stroke="#383838" stroke-width="1.500" stroke-linecap="butt"/></svg>
<svg class="abs" style="left:0;top:18.500px" width="160" height="96" viewBox="0 0 160 96"><rect x="0" y="0" width="160" height="96" fill="#101010"/>
<rect x="0.5" y="0.5" width="11" height="10.900" fill="#FF9410"/>
<rect x="12.5" y="0.5" width="11" height="10.900" fill="#3010F0"/>
<rect x="24.5" y="0.5" width="11" height="10.900" fill="#F020F0"/>
<rect x="36.5" y="0.5" width="11" height="10.900" fill="#FF1010"/>
<rect x="48.5" y="0.5" width="11" height="10.900" fill="#FFFF10"/>
<rect x="60.5" y="0.5" width="11" height="10.900" fill="#10F020"/>
<rect x="72.5" y="0.5" width="11" height="10.900" fill="#FFFFFF"/>
<rect x="84.5" y="0.5" width="11" height="10.900" fill="#E2E2E2"/>
<rect x="96.5" y="0.5" width="11" height="10.900" fill="#D2D2D2"/>
<rect x="108.5" y="0.5" width="11" height="10.900" fill="#C6C6C6"/>
<rect x="120.5" y="0.5" width="11" height="10.900" fill="#B6B6B6"/>
<rect x="132.5" y="0.5" width="11" height="10.900" fill="#A6A6A6"/>
<rect x="144.5" y="0.5" width="11" height="10.900" fill="#989898"/>
<rect x="0.5" y="12.4" width="11" height="10.900" fill="#10F8FF"/>
<rect x="12.5" y="12.4" width="11" height="10.900" fill="#50F010"/>
<rect x="24.5" y="12.4" width="11" height="10.900" fill="#C01868"/>
<rect x="36.5" y="12.4" width="11" height="10.900" fill="#FF3010"/>
<rect x="48.5" y="12.4" width="11" height="10.900" fill="#80A818"/>
<rect x="60.5" y="12.4" width="11" height="10.900" fill="#10F080"/>
<rect x="72.5" y="12.4" width="11" height="10.900" fill="#969696"/>
<rect x="84.5" y="12.4" width="11" height="10.900" fill="#8A8A8A"/>
<rect x="96.5" y="12.4" width="11" height="10.900" fill="#808080"/>
<rect x="108.5" y="12.4" width="11" height="10.900" fill="#747474"/>
<rect x="120.5" y="12.4" width="11" height="10.900" fill="#686868"/>
<rect x="132.5" y="12.4" width="11" height="10.900" fill="#5A5A5A"/>
<rect x="144.5" y="12.4" width="11" height="10.900" fill="#4A4A4A"/>
<rect x="0.5" y="24.3" width="11" height="10.900" fill="#2070D0"/>
<rect x="12.5" y="24.3" width="11" height="10.900" fill="#20D0FF"/>
<rect x="24.5" y="24.3" width="11" height="10.900" fill="#20C0FF"/>
<rect x="36.5" y="24.3" width="11" height="10.900" fill="#28A0FF"/>
<rect x="48.5" y="24.3" width="11" height="10.900" fill="#7060FF"/>
<rect x="60.5" y="24.3" width="11" height="10.900" fill="#C020F0"/>
<rect x="72.5" y="24.3" width="11" height="10.900" fill="#F020F0"/>
<rect x="84.5" y="24.3" width="11" height="10.900" fill="#F01890"/>
<rect x="96.5" y="24.3" width="11" height="10.900" fill="#FF1010"/>
<rect x="108.5" y="24.3" width="11" height="10.900" fill="#FF2810"/>
<rect x="120.5" y="24.3" width="11" height="10.900" fill="#FFA010"/>
<rect x="132.5" y="24.3" width="11" height="10.900" fill="#FFE010"/>
<rect x="144.5" y="24.3" width="11" height="10.900" fill="#B0FF10"/>
<rect x="0.5" y="36.2" width="11" height="10.900" fill="#10F8FF"/>
<rect x="12.5" y="36.2" width="11" height="10.900" fill="#10FFF0"/>
<rect x="24.5" y="36.2" width="11" height="10.900" fill="#10FFA0"/>
<rect x="36.5" y="36.2" width="11" height="10.900" fill="#10F010"/>
<rect x="48.5" y="36.2" width="11" height="10.900" fill="#10E820"/>
<rect x="60.5" y="36.2" width="11" height="10.900" fill="#A0E810"/>
<rect x="72.5" y="36.2" width="11" height="10.900" fill="#FFB010"/>
<rect x="84.5" y="36.2" width="11" height="10.900" fill="#F85010"/>
<rect x="96.5" y="36.2" width="11" height="10.900" fill="#FF1818"/>
<rect x="108.5" y="36.2" width="11" height="10.900" fill="#E01818"/>
<rect x="120.5" y="36.2" width="11" height="10.900" fill="#D01840"/>
<rect x="132.5" y="36.2" width="11" height="10.900" fill="#FF20E0"/>
<rect x="144.5" y="36.2" width="11" height="10.900" fill="#B020F0"/>
<rect x="0.5" y="48.1" width="11" height="10.900" fill="#20D0FF"/>
<rect x="12.5" y="48.1" width="11" height="10.900" fill="#10FFC0"/>
<rect x="24.5" y="48.1" width="11" height="10.900" fill="#10FF80"/>
<rect x="36.5" y="48.1" width="11" height="10.900" fill="#10A010"/>
<rect x="48.5" y="48.1" width="11" height="10.900" fill="#18A828"/>
<rect x="60.5" y="48.1" width="11" height="10.900" fill="#80A818"/>
<rect x="72.5" y="48.1" width="11" height="10.900" fill="#C06010"/>
<rect x="84.5" y="48.1" width="11" height="10.900" fill="#E05010"/>
<rect x="96.5" y="48.1" width="11" height="10.900" fill="#FF3010"/>
<rect x="108.5" y="48.1" width="11" height="10.900" fill="#C81818"/>
<rect x="120.5" y="48.1" width="11" height="10.900" fill="#C01870"/>
<rect x="132.5" y="48.1" width="11" height="10.900" fill="#D01890"/>
<rect x="144.5" y="48.1" width="11" height="10.900" fill="#6018D0"/>
<rect x="0.5" y="60.0" width="11" height="10.900" fill="#10F8FF"/>
<rect x="12.5" y="60.0" width="11" height="10.900" fill="#20A870"/>
<rect x="24.5" y="60.0" width="11" height="10.900" fill="#20A848"/>
<rect x="36.5" y="60.0" width="11" height="10.900" fill="#106010"/>
<rect x="48.5" y="60.0" width="11" height="10.900" fill="#106018"/>
<rect x="60.5" y="60.0" width="11" height="10.900" fill="#105810"/>
<rect x="72.5" y="60.0" width="11" height="10.900" fill="#803010"/>
<rect x="84.5" y="60.0" width="11" height="10.900" fill="#981810"/>
<rect x="96.5" y="60.0" width="11" height="10.900" fill="#D01818"/>
<rect x="108.5" y="60.0" width="11" height="10.900" fill="#901010"/>
<rect x="120.5" y="60.0" width="11" height="10.900" fill="#801030"/>
<rect x="132.5" y="60.0" width="11" height="10.900" fill="#801050"/>
<rect x="144.5" y="60.0" width="11" height="10.900" fill="#401090"/>
<rect x="0.5" y="71.9" width="11" height="10.900" fill="#20B0B0"/>
<rect x="12.5" y="71.9" width="11" height="10.900" fill="#188058"/>
<rect x="24.5" y="71.9" width="11" height="10.900" fill="#188030"/>
<rect x="36.5" y="71.9" width="11" height="10.900" fill="#083808"/>
<rect x="48.5" y="71.9" width="11" height="10.900" fill="#083008"/>
<rect x="60.5" y="71.9" width="11" height="10.900" fill="#083008"/>
<rect x="72.5" y="71.9" width="11" height="10.900" fill="#501008"/>
<rect x="84.5" y="71.9" width="11" height="10.900" fill="#601010"/>
<rect x="96.5" y="71.9" width="11" height="10.900" fill="#A01010"/>
<rect x="108.5" y="71.9" width="11" height="10.900" fill="#601010"/>
<rect x="120.5" y="71.9" width="11" height="10.900" fill="#500820"/>
<rect x="132.5" y="71.9" width="11" height="10.900" fill="#501038"/>
<rect x="144.5" y="71.9" width="11" height="10.900" fill="#200850"/>
<rect x="0.5" y="83.8" width="11" height="10.900" fill="#101878"/>
<rect x="12.5" y="83.8" width="11" height="10.900" fill="#206090"/>
<rect x="24.5" y="83.8" width="11" height="10.900" fill="#208090"/>
<rect x="36.5" y="83.8" width="11" height="10.900" fill="#2090FF"/>
<rect x="48.5" y="83.8" width="11" height="10.900" fill="#2088F8"/>
<rect x="60.5" y="83.8" width="11" height="10.900" fill="#2070D0"/>
<rect x="72.5" y="83.8" width="11" height="10.900" fill="#205890"/>
<rect x="84.5" y="83.8" width="11" height="10.900" fill="#103050"/>
<rect x="96.5" y="83.8" width="11" height="10.900" fill="#2088F8"/>
<rect x="108.5" y="83.8" width="11" height="10.900" fill="#2070E0"/>
<rect x="120.5" y="83.8" width="11" height="10.900" fill="#2058C0"/>
<rect x="132.5" y="83.8" width="11" height="10.900" fill="#103890"/>
<rect x="144.5" y="83.8" width="11" height="10.900" fill="#081050"/>
</svg>
<svg class="abs" style="left:0;top:114px" width="160" height="88" viewBox="0 0 160 88">
<defs>
<radialGradient id="soft"><stop offset="0" stop-color="#fff"/><stop offset=".25" stop-color="#fff" stop-opacity=".9"/><stop offset=".55" stop-color="#fff" stop-opacity=".35"/><stop offset="1" stop-color="#fff" stop-opacity="0"/></radialGradient>
<radialGradient id="hard"><stop offset="0" stop-color="#fff"/><stop offset=".8" stop-color="#fff"/><stop offset="1" stop-color="#e8e8e8" stop-opacity=".3"/></radialGradient>
</defs>
<rect x="132.500" y="0" width="40" height="23.300" fill="#3a7fe8"/>
<g stroke="#4c4c4c" stroke-width="1"><path d="M0 23.500h132M0 55.500h160M32.500 0v88M65.500 0v88M98.500 0v88M131.500 0v88"/></g>
<circle cx="16.300" cy="8" r=".9" fill="#ddd"/>
<circle cx="49.300" cy="8" r="1.300" fill="#eee"/>
<circle cx="82.300" cy="8" r="2.800" fill="url(#hard)"/>
<circle cx="115.500" cy="8" r="5.400" fill="url(#hard)"/>
<circle cx="149.500" cy="7.500" r="9" fill="url(#hard)"/>
<circle cx="16" cy="35.500" r="6" fill="url(#soft)"/>
<circle cx="49" cy="35.500" r="6.500" fill="url(#soft)"/>
<circle cx="82" cy="35.500" r="6.500" fill="url(#soft)" opacity=".9"/>
<circle cx="115" cy="35.500" r="5.800" fill="url(#hard)"/>
<circle cx="149" cy="41" r="8.500" fill="url(#hard)"/>
<path d="M10 72l2-4 3-3 3 .500-1 2 3-.500-2 2.500 2 1-3 1-1 2-2-1.500-2 2z" fill="#cfcfcf"/>
<path d="M44 66c2-2 5-2 7 0 2 1 2 4 0 5 1 2-2 3-4 2-2 1-5 0-4-2-2-2-1-4 1-5z" fill="#c8c8c8"/>
<path d="M113 64l1 2-1 2 2 1-1 3 1 3M116 65l1 3-1 3 1 3" stroke="#9a9a9a" stroke-width="1" fill="none" stroke-dasharray="1.500 1"/>
<circle cx="147.200" cy="68.500" r="4.300" fill="url(#soft)"/><circle cx="147.200" cy="68.500" r="2.500" fill="#fff"/>
<g font-family="Liberation Sans, sans-serif" font-size="10.300" fill="#ececec" stroke="#ececec" stroke-width=".25" text-anchor="middle">
<text x="16" y="51.500">30</text><text x="49" y="51.500">50</text><text x="82" y="51.500">100</text><text x="115" y="51.500">30</text>
<text x="16" y="84.500">70</text><text x="49" y="84.500">80</text><text x="82" y="84.500">100</text><text x="115" y="84.500">30</text><text x="148" y="84.500">80</text>
</g>
</svg>
</div>
</body></html>
